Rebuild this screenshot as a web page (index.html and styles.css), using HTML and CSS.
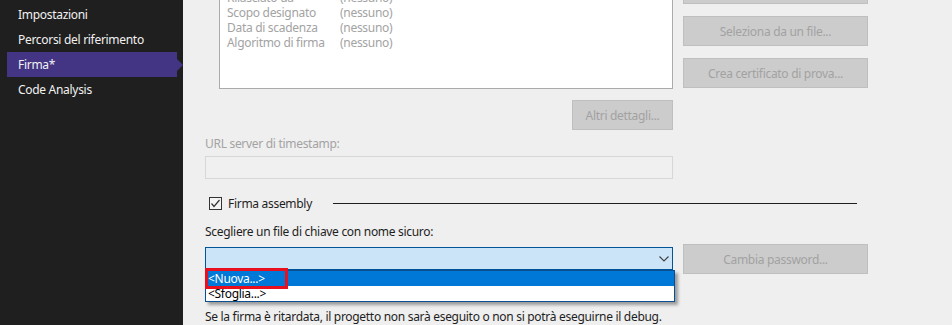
FILE: index.html
```html
<!DOCTYPE html>
<html lang="it">
<head>
<meta charset="utf-8">
<title>Firma</title>
<link rel="stylesheet" href="styles.css">
</head>
<body>
<div class="app">
  <nav class="sidebar">
    <div class="nav-item">Impostazioni</div>
    <div class="nav-item">Percorsi del riferimento</div>
    <div class="nav-item active">Firma*</div>
    <div class="nav-item">Code Analysis</div>
  </nav>
  <main class="main">
    <div class="top-row">
      <div class="cert-box">
        <div class="cert-row"><span class="cert-key">Rilasciato da</span><span>(nessuno)</span></div>
        <div class="cert-row"><span class="cert-key">Scopo designato</span><span>(nessuno)</span></div>
        <div class="cert-row"><span class="cert-key">Data di scadenza</span><span>(nessuno)</span></div>
        <div class="cert-row"><span class="cert-key">Algoritmo di firma</span><span>(nessuno)</span></div>
      </div>
      <div class="btn-col">
        <button class="btn">Seleziona dall'archivio...</button>
        <button class="btn">Seleziona da un file...</button>
        <button class="btn">Crea certificato di prova...</button>
      </div>
    </div>
    <div class="details-row">
      <button class="btn btn-small">Altri dettagli...</button>
    </div>
    <div class="ts-label">URL server di timestamp:</div>
    <div class="ts-input"></div>
    <div class="check-row">
      <span class="checkbox">
        <svg width="11" height="11" viewBox="0 0 11 11"><polyline points="1.5,5.5 4,8.5 9.5,2" fill="none" stroke="#333" stroke-width="1.2"/></svg>
      </span>
      <span class="check-label">Firma assembly</span>
      <span class="rule"></span>
    </div>
    <div class="key-label">Scegliere un file di chiave con nome sicuro:</div>
    <div class="key-row">
      <div class="combo-wrap">
        <div class="combo">
          <svg class="chev" width="10" height="6" viewBox="0 0 10 6"><polyline points="0.5,0.5 5,5 9.5,0.5" fill="none" stroke="#404040" stroke-width="1.1"/></svg>
        </div>
        <div class="combo-list">
          <div class="opt selected">&lt;Nuova...&gt;</div>
          <div class="opt">&lt;Sfoglia...&gt;</div>
          <div class="red-box"></div>
        </div>
      </div>
      <button class="btn">Cambia password...</button>
    </div>
    <div class="note">Se la firma è ritardata, il progetto non sarà eseguito o non si potrà eseguirne il debug.</div>
  </main>
</div>
</body>
</html>
```

FILE: styles.css
```css
* { box-sizing: border-box; }
html, body { margin: 0; padding: 0; }
body {
  font-family: "Noto Sans", "Open Sans", sans-serif;
  font-size: 12px;
  letter-spacing: -0.3px;
  background: #efefef;
  overflow: hidden;
  width: 952px;
  height: 325px;
}
.app { display: flex; height: 325px; }
.sidebar {
  width: 183px;
  flex: none;
  background: #1f1f1f;
  padding-top: 2px;
}
.nav-item {
  position: relative;
  height: 25px;
  line-height: 25px;
  margin-left: 7px;
  width: 170px;
  padding-left: 11px;
  color: #f1f1f1;
  white-space: nowrap;
}
.nav-item.active { background: #433584; }
.nav-item.active::after {
  content: "";
  position: absolute;
  right: -6px;
  top: 6.5px;
  border-top: 6px solid transparent;
  border-bottom: 6px solid transparent;
  border-left: 6px solid #433584;
}
.main {
  padding-left: 22px;
  display: flex;
  flex-direction: column;
}
.top-row {
  display: flex;
  gap: 10px;
  margin-top: -26px;
  align-items: flex-start;
}
.cert-box {
  margin-left: 14px;
  width: 454px;
  height: 115px;
  background: #fff;
  border: 1px solid #ababab;
  padding: 15px 0 0 7px;
  color: #a3a3a3;
  overflow: hidden;
}
.cert-row { display: flex; height: 15px; line-height: 15px; white-space: nowrap; }
.cert-key { width: 113px; }
.btn-col { display: flex; flex-direction: column; gap: 12px; width: 185px; }
.btn {
  font: inherit;
  letter-spacing: inherit;
  width: 185px;
  height: 30px;
  background: #cccccc;
  border: 1px solid #bfbfbf;
  color: #a2a2a2;
  padding: 0;
  margin: 0;
}
.btn-small { width: 101px; }
.details-row {
  width: 468px;
  display: flex;
  justify-content: flex-end;
  margin-top: 11px;
}
.ts-label {
  margin-top: 6px;
  height: 16px;
  line-height: 16px;
  color: #a3a3a3;
}
.ts-input {
  margin-top: 4px;
  width: 468px;
  height: 23px;
  border: 1px solid #d7d7d7;
  background: #f0f0f0;
}
.check-row {
  margin-top: 16px;
  height: 16px;
  width: 652px;
  display: flex;
  align-items: center;
}
.checkbox {
  margin-left: 4px;
  width: 13px;
  height: 13px;
  border: 1px solid #333;
  background: #f4f4f4;
  display: flex;
  align-items: center;
  justify-content: center;
}
.check-label { margin-left: 6px; color: #1e1e1e; white-space: nowrap; }
.rule {
  margin-left: auto;
  width: 524px;
  height: 1px;
  background: #1e1e1e;
}
.key-label {
  margin-top: 13px;
  height: 16px;
  line-height: 16px;
  color: #1e1e1e;
}
.key-row {
  margin-top: 4px;
  display: flex;
  gap: 10px;
  align-items: flex-start;
}
.combo-wrap { position: relative; width: 468px; margin-top: 3px; }
.combo {
  height: 23px;
  background: #cce4f7;
  border: 1px solid #005499;
  display: flex;
  align-items: center;
  justify-content: flex-end;
  padding-right: 3px;
}
.combo-list {
  position: absolute;
  left: 0;
  top: 23px;
  width: 470px;
  height: 32px;
  background: #fff;
  border: 1px solid #0a4f8f;
  box-shadow: 3px 3px 3px rgba(0, 0, 0, 0.35);
}
.opt {
  height: 15px;
  line-height: 15px;
  padding-left: 2px;
  color: #000;
  white-space: nowrap;
}
.opt.selected { background: #0078d7; color: #fff; }
.red-box {
  position: absolute;
  left: -1px;
  top: -3px;
  width: 83px;
  height: 21px;
  border: 3px solid #e8101e;
}
.note {
  margin-top: 35px;
  height: 16px;
  line-height: 16px;
  color: #1e1e1e;
  white-space: nowrap;
}
```
